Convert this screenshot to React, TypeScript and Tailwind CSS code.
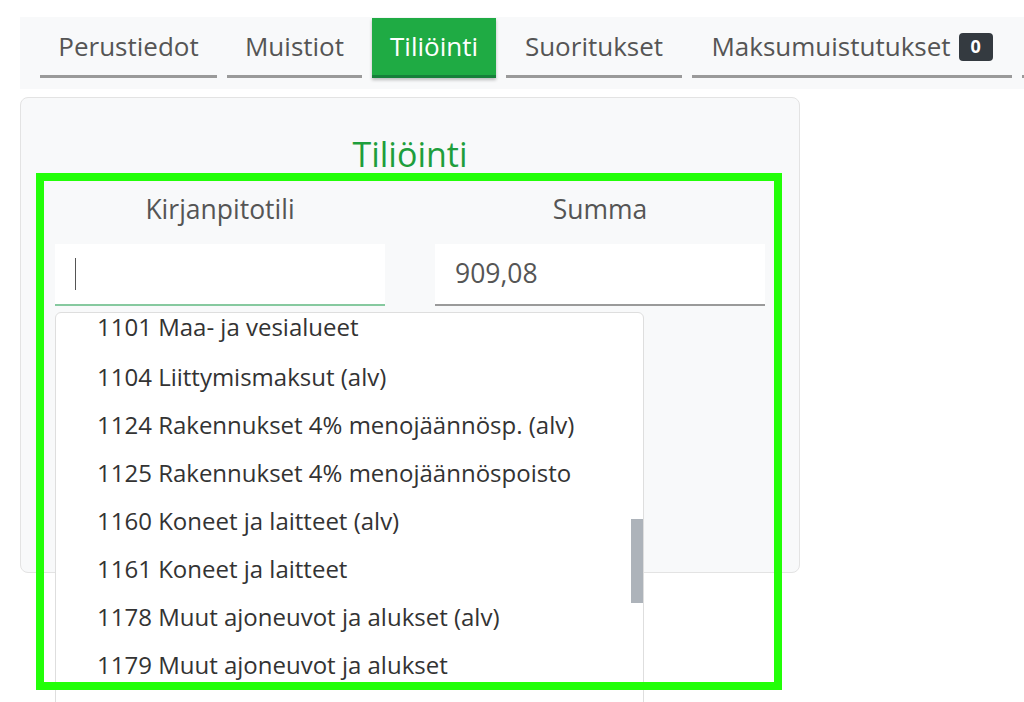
import React from "react";

const tabs = [
  { label: "Perustiedot", w: "w-[177px]" },
  { label: "Muistiot", w: "w-[135px]" },
  { label: "Tiliöinti", w: "w-[124px]", active: true },
  { label: "Suoritukset", w: "w-[176px]" },
  { label: "Maksumuistutukset", w: "w-[320px]", badge: "0" },
];

const accounts = [
  "1101 Maa- ja vesialueet",
  "1104 Liittymismaksut (alv)",
  "1124 Rakennukset 4% menojäännösp. (alv)",
  "1125 Rakennukset 4% menojäännöspoisto",
  "1160 Koneet ja laitteet (alv)",
  "1161 Koneet ja laitteet",
  "1178 Muut ajoneuvot ja alukset (alv)",
  "1179 Muut ajoneuvot ja alukset",
];

export default function App() {
  return (
    <div className="relative w-[1024px] h-[702px] overflow-hidden bg-white pt-[17px] font-['Open_Sans',sans-serif] text-[#555]">
      <div className="ml-[20px] h-[72px] bg-[#f8f9fa] flex items-start pl-[20px] gap-[10px] pt-[1px]">
        {tabs.map((t) => (
          <div
            key={t.label}
            className={`${t.w} shrink-0 h-[60px] flex items-center justify-center gap-[8px] text-[26px] ${
              t.active
                ? "bg-[#1fab44] text-white border-b-[3px] border-[#16803a] shadow-[0_2px_3px_rgba(0,0,0,0.25)]"
                : "border-b-[3px] border-[#9a9a9a]"
            }`}
          >
            <span>{t.label}</span>
            {t.badge && (
              <span className="bg-[#343a40] text-white text-[18px] font-bold rounded-[4px] w-[34px] h-[28px] flex items-center justify-center">
                {t.badge}
              </span>
            )}
          </div>
        ))}
        <div className="w-[20px] shrink-0 h-[60px] border-b-[3px] border-[#9a9a9a]" />
      </div>

      <div className="relative mt-[8px] ml-[20px] w-[780px] h-[476px] rounded-[8px] border border-[#e3e3e3] bg-[#f8f9fa] px-[34px] pt-[32px]">
        <h2 className="text-center text-[34px] leading-[48px] text-[#1e9e3c]">Tiliöinti</h2>
        <div className="grid grid-cols-2 gap-[50px] mt-[12px]">
          <div>
            <div className="text-center text-[26.5px] leading-[38px]">Kirjanpitotili</div>
            <div className="mt-[16px] h-[62px] bg-white border-b-2 border-[#86c99f] flex items-center pl-[20px]">
              <span className="w-[1px] h-[32px] bg-[#555]" />
            </div>
          </div>
          <div>
            <div className="text-center text-[26.5px] leading-[38px]">Summa</div>
            <div className="mt-[16px] h-[62px] bg-white border-b-2 border-[#9a9a9a] flex items-center pl-[20px] text-[26.5px]">
              909,08
            </div>
          </div>
        </div>

        <div className="absolute left-[34px] top-[214px] w-[589px] h-[400px] bg-white border border-[#dedede] rounded-t-[6px] overflow-hidden">
          {accounts.map((a, i) => (
            <div
              key={a}
              className={`${
                i === 0 ? "h-[40px] items-start pt-[2px]" : "h-[48px] items-center"
              } flex pl-[41px] text-[24px] leading-none text-[#333]`}
            >
              {a}
            </div>
          ))}
          <div className="absolute right-0 top-[206px] w-[12px] h-[84px] bg-[#adb3ba]" />
        </div>
      </div>

      <div className="absolute left-[36px] top-[173px] w-[746px] h-[517px] border-[8px] border-[#22ff08] pointer-events-none" />
    </div>
  );
}
